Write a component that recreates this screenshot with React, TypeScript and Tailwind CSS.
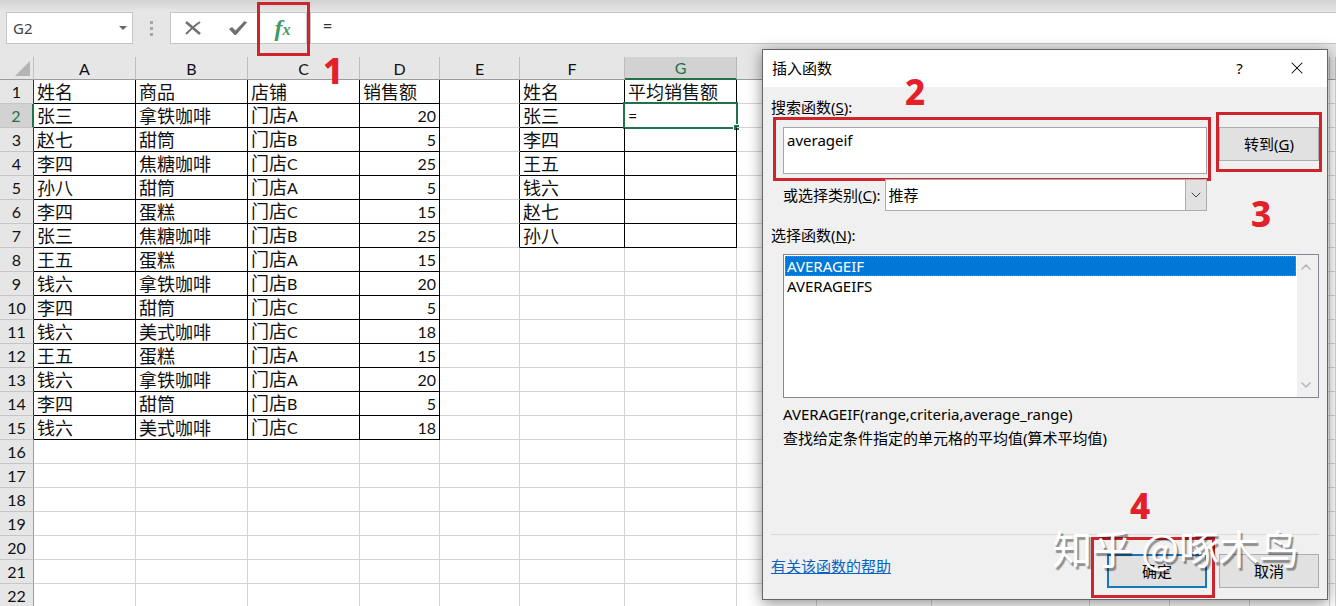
import { ChevronDown, ChevronUp, X } from "lucide-react";
import clsx from "clsx";

const COLUMNS = [
  { name: "A", width: "w-[102px]" },
  { name: "B", width: "w-[112px]" },
  { name: "C", width: "w-[112px]" },
  { name: "D", width: "w-[80px]" },
  { name: "E", width: "w-[80px]" },
  { name: "F", width: "w-[105px]" },
  { name: "G", width: "w-[112px]" },
  { name: "", width: "w-[80px]" },
  { name: "", width: "w-[115px]" },
  { name: "", width: "w-[158px]" },
  { name: "", width: "w-[80px]" },
  { name: "", width: "w-[80px]" },
  { name: "", width: "w-[80px]" },
  { name: "", width: "" },
];

const SALES = [
  ["姓名", "商品", "店铺", "销售额"],
  ["张三", "拿铁咖啡", "门店A", "20"],
  ["赵七", "甜筒", "门店B", "5"],
  ["李四", "焦糖咖啡", "门店C", "25"],
  ["孙八", "甜筒", "门店A", "5"],
  ["李四", "蛋糕", "门店C", "15"],
  ["张三", "焦糖咖啡", "门店B", "25"],
  ["王五", "蛋糕", "门店A", "15"],
  ["钱六", "拿铁咖啡", "门店B", "20"],
  ["李四", "甜筒", "门店C", "5"],
  ["钱六", "美式咖啡", "门店C", "18"],
  ["王五", "蛋糕", "门店A", "15"],
  ["钱六", "拿铁咖啡", "门店A", "20"],
  ["李四", "甜筒", "门店B", "5"],
  ["钱六", "美式咖啡", "门店C", "18"],
];

const AVERAGES = [
  ["姓名", "平均销售额"],
  ["张三", "="],
  ["李四", ""],
  ["王五", ""],
  ["钱六", ""],
  ["赵七", ""],
  ["孙八", ""],
];

const ROWS = Array.from({ length: 22 }, (_, i) => i);

const getValue = (row: number, col: number) => {
  if (col < 4) return SALES[row]?.[col] ?? "";
  if (col === 5 || col === 6) return AVERAGES[row]?.[col - 5] ?? "";
  return "";
};

const hasBottomBorder = (row: number, col: number) =>
  (col < 4 && row < SALES.length) ||
  ((col === 5 || col === 6) && row < AVERAGES.length);

// column E closes the second table on its left side
const hasRightBorder = (row: number, col: number) =>
  hasBottomBorder(row, col) || (col === 4 && row < AVERAGES.length);

const CellText = ({ value }: { value: string }) => {
  const latin = value.replace(/[^\x20-\x7e]/g, "");
  const text = value.replace(/[\x20-\x7e]/g, "");
  return (
    <>
      {text}
      {latin && <span className="text-[16px]">{latin}</span>}
    </>
  );
};

const FormulaBar = () => {
  return (
    <div className="flex h-[57px] items-start bg-linear-to-b from-[#d2d2d2] to-[#e6e6e6] to-20% pt-3 pl-1.5 font-['Noto_Sans',sans-serif]">
      <div className="relative">
        <input
          aria-label="名称框"
          defaultValue="G2"
          className="block h-8 w-[127px] border border-[#c6c6c6] bg-white px-1.5 text-[15px] text-[#444]"
        />
        <span className="absolute top-3.5 right-1.5 border-x-4 border-t-4 border-x-transparent border-t-[#666]" />
      </div>

      <div className="flex h-8 w-[37px] flex-col items-center justify-center gap-[3px]">
        <span className="size-[3px] bg-[#a6a6a6]" />
        <span className="size-[3px] bg-[#a6a6a6]" />
        <span className="size-[3px] bg-[#a6a6a6]" />
      </div>

      <div className="flex h-8 border border-[#c6c6c6] bg-white text-[#707070]">
        <button aria-label="取消" className="flex w-[45px] items-center justify-center pr-0.5">
          <svg viewBox="0 0 16 14" className="h-3.5 w-4" fill="none" stroke="currentColor">
            <path d="M1 1 15 13" strokeWidth="2.6" />
            <path d="M15 1C9 5 5 9 1 13" strokeWidth="2" />
          </svg>
        </button>
        <button aria-label="输入" className="flex w-[45px] items-center justify-center pr-0.5">
          <svg viewBox="0 0 18 14" className="h-3.5 w-[18px]">
            <path d="M0 8 3 6 6.500 9.500 15.500 0 18 1.500 7 14 5.500 14Z" fill="currentColor" />
          </svg>
        </button>
        <button
          aria-label="插入函数"
          className="relative flex w-[45px] items-center justify-center pr-0.5 font-['Liberation_Serif',serif] text-[#3f9a68] italic"
        >
          <span className="text-[24px] leading-6 font-bold">f</span>
          <span className="pt-1 text-[16px] leading-6 font-bold">x</span>
          <span className="absolute -inset-x-1 -top-[11px] -bottom-[13px] border-3 border-[#d0242c]" />
        </button>
      </div>

      <input
        aria-label="编辑栏"
        defaultValue="="
        className="ml-[3px] block h-8 min-w-0 flex-1 border-y border-l border-[#c6c6c6] bg-white px-3 pb-1 text-[16px] text-[#333]"
      />
    </div>
  );
};

const Sheet = () => {
  return (
    <table className="w-full min-w-[1330px] table-fixed border-separate border-spacing-0 bg-white font-[Lato,'Noto_Sans_CJK_SC',sans-serif] text-[#111]">
      <thead>
        <tr className="h-[23px] bg-[#e6e6e6] text-[16px] leading-[21px]">
          <th className="w-[34px] border-r border-b border-r-[#c0c0c0] border-b-[#9b9b9b] p-0">
            <svg viewBox="0 0 15 15" className="ml-[15px] block size-[15px]">
              <path d="M15 0V15H0Z" fill="#b4b4b4" />
            </svg>
          </th>
          {COLUMNS.map((column, col) => (
            <th
              key={col}
              className={clsx(
                "border-r p-0 font-normal",
                column.width,
                column.name === "G"
                  ? "border-b-2 border-r-[#b5b5b5] border-b-[#217346] bg-[#d2d2d2] text-[#217346]"
                  : "border-b border-r-[#bdbdbd] border-b-[#9b9b9b]"
              )}
            >
              {column.name}
            </th>
          ))}
        </tr>
      </thead>
      <tbody>
        {ROWS.map((row) => (
          <tr key={row} className="h-6">
            <th
              className={clsx(
                "border-b border-b-[#c6c6c6] p-0 text-[16px] leading-[22px] font-normal",
                row === 1
                  ? "border-r-2 border-r-[#217346] bg-[#d2d2d2] text-[#217346]"
                  : "border-r bg-[#e6e6e6]",
                row !== 1 && (row < SALES.length ? "border-r-[#333]" : "border-r-[#9b9b9b]")
              )}
            >
              {row + 1}
            </th>
            {COLUMNS.map((_, col) => (
              <td
                key={col}
                className={clsx(
                  "relative border-r border-b px-[3px] py-0 text-[18px] leading-[22px] whitespace-nowrap",
                  hasRightBorder(row, col) ? "border-r-black" : "border-r-[#d4d4d4]",
                  hasBottomBorder(row, col) ? "border-b-black" : "border-b-[#d4d4d4]",
                  col === 3 && row > 0 && "text-right"
                )}
              >
                <CellText value={getValue(row, col)} />
                {row === 1 && col === 6 && (
                  <span className="absolute -inset-x-0.5 -top-0.5 -bottom-0.5 border-2 border-[#217346]">
                    <span className="absolute -right-[3px] -bottom-[3px] size-1.5 border-t border-l border-white bg-[#217346]" />
                  </span>
                )}
              </td>
            ))}
          </tr>
        ))}
      </tbody>
    </table>
  );
};

const Step = ({ className, children }: { className: string; children: string }) => (
  <span
    className={clsx(
      "pointer-events-none absolute font-['Noto_Sans',sans-serif] text-[35px] leading-9 font-extrabold text-[#e3202a]",
      className
    )}
  >
    {children}
  </span>
);

const Dialog = () => {
  return (
    <section
      role="dialog"
      aria-labelledby="dialog-title"
      className="absolute top-[49px] right-2 w-[566px] border border-[#666] bg-[#f0f0f0] font-['Noto_Sans','Noto_Sans_CJK_SC',sans-serif] text-[15px] leading-6 text-black shadow-[0_3px_14px_rgba(0,0,0,0.45)]"
    >
      <header className="flex h-[37px] items-center bg-white pr-0.5 pb-0.5 pl-[9px]">
        <h2 id="dialog-title" className="flex-1">插入函数</h2>
        <button aria-label="帮助" className="w-[57px]">?</button>
        <button aria-label="关闭" className="flex w-[57px] justify-center">
          <X size={20} strokeWidth={1.25} />
        </button>
      </header>

      <div className="px-2 pt-2 pb-[11px]">
        <label htmlFor="search" className="block">
          搜索函数(<u>S</u>):
        </label>
        <div className="mt-2 flex items-start gap-3 pl-3">
          <div className="relative flex-1">
            <textarea
              id="search"
              defaultValue="averageif"
              className="block h-[47px] w-full resize-none border border-[#a5a5ad] bg-white px-[3px] py-0.5 leading-5"
            />
            <span className="pointer-events-none absolute -top-2.5 -right-1 -bottom-[7px] -left-2.5 border-3 border-[#d0242c]" />
          </div>
          <button className="relative h-[34px] w-[100px] border border-[#adadad] bg-[#e1e1e1]">
            转到(<u>G</u>)
            <span className="pointer-events-none absolute -inset-x-1 -top-4 -bottom-3 border-3 border-[#d0242c]" />
          </button>
        </div>

        <div className="mt-[5px] flex items-center gap-1 pr-28 pl-3">
          <label htmlFor="category">
            或选择类别(<u>C</u>):
          </label>
          <div className="relative flex-1">
            <select
              id="category"
              className="block h-8 w-full appearance-none border border-[#adadad] bg-white px-[3px]"
            >
              <option>推荐</option>
            </select>
            <span className="pointer-events-none absolute inset-y-0 right-0 flex w-[22px] items-center justify-center border border-[#adadad] bg-[#e1e1e1]">
              <ChevronDown size={16} strokeWidth={1.5} color="#444" />
            </span>
          </div>
        </div>

        <p id="functions-label" className="mt-3">
          选择函数(<u>N</u>):
        </p>
        <div className="mt-[7px] ml-3 flex h-36 border border-[#828790] bg-white">
          <ul role="listbox" aria-labelledby="functions-label" className="flex-1 p-px leading-5">
            <li
              role="option"
              aria-selected="true"
              className="h-5 border border-dotted border-[#c8762b] bg-[#0078d7] px-px leading-[18px] text-white"
            >
              AVERAGEIF
            </li>
            <li role="option" aria-selected="false" className="h-5 px-0.5">
              AVERAGEIFS
            </li>
          </ul>
          <div className="flex w-[21px] flex-col items-center justify-between bg-[#f0f0f0] py-1 pr-1 text-[#b8b8b8]">
            <ChevronUp size={16} strokeWidth={2.5} />
            <ChevronDown size={16} strokeWidth={2.5} />
          </div>
        </div>

        <p className="mt-1 pl-3">AVERAGEIF(range,criteria,average_range)</p>
        <p className="pl-3">查找给定条件指定的单元格的平均值(算术平均值)</p>

        <div className="mt-[84px] flex items-start border-t border-[#d9d9d9] pt-[19px]">
          <a href="#" className="flex-1 text-[#0563c1] underline">
            有关该函数的帮助
          </a>
          <div className="flex gap-3">
            <button className="relative h-[34px] w-[100px] border-2 border-[#1777bd] bg-[#e1e1e1]">
              确定
              <span className="pointer-events-none absolute -top-[19px] -right-[10px] -bottom-3 -left-[18px] border-3 border-[#d0242c]" />
            </button>
            <button className="h-[34px] w-[100px] border border-[#adadad] bg-[#e1e1e1]">
              取消
            </button>
          </div>
        </div>
      </div>

      <Step className="top-6 left-[142px]">2</Step>
      <Step className="top-[146px] left-[488px]">3</Step>
      <Step className="top-[438px] left-[367px]">4</Step>
      <span className="pointer-events-none absolute right-7 bottom-8 font-['Noto_Sans_CJK_SC',sans-serif] text-[40px] leading-10 whitespace-nowrap text-white [text-shadow:2px_3px_1px_rgba(0,0,0,0.4)]">
        知乎 @啄木鸟
      </span>
    </section>
  );
};

export default function App() {
  return (
    <main className="relative h-screen overflow-hidden bg-[#e6e6e6]">
      <FormulaBar />
      <Sheet />
      <Step className="top-[53px] left-[323px]">1</Step>
      <Dialog />
    </main>
  );
}
